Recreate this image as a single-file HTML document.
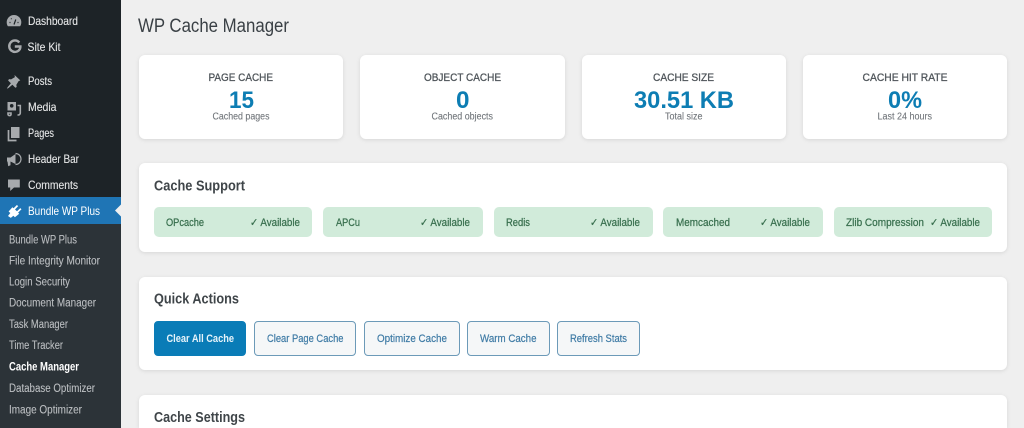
<!DOCTYPE html>
<html lang="en"><head><meta charset="utf-8"><title>WP Cache Manager</title>
<style>
html,body{margin:0;padding:0;width:1024px;height:428px;overflow:hidden;background:#efefef;font-family:"Liberation Sans",sans-serif}
#wrap{position:relative;width:1024px;height:428px;overflow:hidden;background:#efefef}
.b{position:absolute;box-sizing:border-box}
.card{background:#fff;border-radius:6px;box-shadow:0 1px 4px rgba(0,0,0,.10)}
.chip{background:#d1ebda;border-radius:5px;top:207px;height:30px}
.btn{top:321px;height:35px;border-radius:4px;background:#f5f7f8;border:1px solid #6c9ab8}
svg{position:absolute;left:0;top:0;filter:blur(.25px)}
.m{fill:#e4e5e6;font-size:12px;stroke:#e4e5e6;stroke-width:.12px}
.s{fill:#bcbfc2;font-size:11.5px;stroke:#bcbfc2;stroke-width:.1px}
.h{fill:#3f4549;font-size:14.5px;font-weight:bold}
.l{fill:#50565b;font-size:11px;stroke:#50565b;stroke-width:.3px}
.n{fill:#0d7db3;font-size:24px;font-weight:bold}
.d{fill:#70757a;font-size:10.5px;stroke:#70757a;stroke-width:.1px}
.c{fill:#39704f;font-size:11px;stroke:#39704f;stroke-width:.25px}
.q{fill:#3f7ba5;font-size:11px;stroke:#3f7ba5;stroke-width:.2px}
.i{fill:#a7aaad}
</style></head><body>
<div id="wrap">
<div class="b" style="left:0;top:0;width:121px;height:428px;background:#1d2327"></div>
<div class="b" style="left:0;top:197px;width:121px;height:27px;background:#1f75b5"></div>
<div class="b" style="left:0;top:224px;width:121px;height:204px;background:#2c3338"></div>

<div class="b card" style="left:139px;top:55px;width:204px;height:84px"></div>
<div class="b card" style="left:360px;top:55px;width:205px;height:84px"></div>
<div class="b card" style="left:582px;top:55px;width:204px;height:84px"></div>
<div class="b card" style="left:803px;top:55px;width:204px;height:84px"></div>
<div class="b card" style="left:139px;top:163px;width:868px;height:89px"></div>
<div class="b card" style="left:139px;top:277px;width:868px;height:93px"></div>
<div class="b card" style="left:139px;top:395px;width:868px;height:33px;border-radius:6px 6px 0 0"></div>

<div class="b chip" style="left:154px;width:158px"></div>
<div class="b chip" style="left:323px;width:160px"></div>
<div class="b chip" style="left:494px;width:159px"></div>
<div class="b chip" style="left:663px;width:160px"></div>
<div class="b chip" style="left:834px;width:158px"></div>

<div class="b btn" style="left:154px;width:92px;background:#0a7cb7;border-color:#0a7cb7"></div>
<div class="b btn" style="left:254px;width:102px"></div>
<div class="b btn" style="left:364px;width:96px"></div>
<div class="b btn" style="left:467px;width:83px"></div>
<div class="b btn" style="left:557px;width:83px"></div>

<svg width="1024" height="428" viewBox="0 0 1024 428">
<!-- sidebar icons -->
<path class="i" d="M14 15a7.300 7.300 0 0 0-7.300 7.300c0 1.600.4 2.900 1.200 3.900h12.200c.8-1 1.200-2.300 1.200-3.900a7.300 7.300 0 0 0-7.300-7.300z"/>
<path d="M14 24.500l1.800-5M9.500 22.500h1M17.500 22.500h1M11 18.500l.6.600" stroke="#1d2327" stroke-width="1.200" fill="none"/>
<path d="M19.300 42.500a5.700 5.700 0 1 0 .6 6.500 5.700 5.700 0 0 0 .5-2.500h-5.600" fill="none" stroke="#a7aaad" stroke-width="2.400"/>
<path class="i" d="M14.500 75l5.800 5.400-1.700.7-2.300 3.800.4 2.100-1.300.8-3-3-3.900 3.200-1.600.7.700-1.500 3.300-3.900-2.800-2.800.9-1.400 2.100.3 3.800-2.300z"/>
<path class="i" d="M7.500 102h8.500v8.500h-8.500z"/><circle cx="11.700" cy="105.800" r="1.800" fill="#1d2327"/>
<path d="M17.500 105.500h2.800v7.500a2 2 0 0 1-2 2h-.8M8 113h3v1.600a1.300 1.300 0 0 1-1.500 0.900 1.300 1.300 0 0 1-1.500-1.200z" fill="none" stroke="#a7aaad" stroke-width="1.600"/>
<path class="i" d="M11 127h8.500v11H11z"/><path d="M8.500 130v10.500h8" fill="none" stroke="#a7aaad" stroke-width="1.700"/>
<path class="i" d="M7 157.500h3.500l5-3.500v10l-5-2.500v3.800l-2.300 1-.7-4.800H7z"/>
<path d="M15.500 153.500a5.500 5.500 0 0 1 0 11" fill="none" stroke="#a7aaad" stroke-width="1.200"/>
<path class="i" d="M8 179.500h11.800v8h-5.800l-3.800 3.500v-3.500H8z"/>
<path fill="#fff" d="M8 217l2.300-3-1.700-1.500 3.800-4.300 1.200 1.100 3.300-3.300 1.300 1.100-3.200 3.400 2 1.800 3.300-3.200 1.200 1.200-3.400 3.300 1.100 1.100-4.300 3.600-1.500-1.500-2.600 2.100z" transform="translate(0 -1)"/>
<path fill="#efefef" d="M121 204.500l-6 6 6 6z"/>

<!-- sidebar text -->
<text class="m" x="28" y="25" textLength="50" lengthAdjust="spacingAndGlyphs">Dashboard</text>
<text class="m" x="27.500" y="51" textLength="33" lengthAdjust="spacingAndGlyphs">Site Kit</text>
<text class="m" x="28" y="85" textLength="24" lengthAdjust="spacingAndGlyphs">Posts</text>
<text class="m" x="28" y="111" textLength="28.500" lengthAdjust="spacingAndGlyphs">Media</text>
<text class="m" x="28" y="137" textLength="26" lengthAdjust="spacingAndGlyphs">Pages</text>
<text class="m" x="28" y="163" textLength="51" lengthAdjust="spacingAndGlyphs">Header Bar</text>
<text class="m" x="28" y="189" textLength="50" lengthAdjust="spacingAndGlyphs">Comments</text>
<text x="28" y="215" textLength="72" lengthAdjust="spacingAndGlyphs" style="fill:#fff;font-size:12px">Bundle WP Plus</text>

<text class="s" x="9" y="243.500" textLength="68" lengthAdjust="spacingAndGlyphs">Bundle WP Plus</text>
<text class="s" x="9" y="264.500" textLength="91" lengthAdjust="spacingAndGlyphs">File Integrity Monitor</text>
<text class="s" x="9" y="285.500" textLength="61" lengthAdjust="spacingAndGlyphs">Login Security</text>
<text class="s" x="9" y="306.500" textLength="87" lengthAdjust="spacingAndGlyphs">Document Manager</text>
<text class="s" x="9" y="328" textLength="59" lengthAdjust="spacingAndGlyphs">Task Manager</text>
<text class="s" x="9" y="349" textLength="54" lengthAdjust="spacingAndGlyphs">Time Tracker</text>
<text x="9" y="370.500" textLength="70" lengthAdjust="spacingAndGlyphs" style="fill:#fff;font-size:11.500px;font-weight:bold">Cache Manager</text>
<text class="s" x="9" y="392" textLength="86" lengthAdjust="spacingAndGlyphs">Database Optimizer</text>
<text class="s" x="9" y="413.500" textLength="73" lengthAdjust="spacingAndGlyphs">Image Optimizer</text>

<!-- main -->
<text x="138" y="32" textLength="151" lengthAdjust="spacingAndGlyphs" style="fill:#3a4045;font-size:19px">WP Cache Manager</text>

<text class="l" x="208.500" y="81" textLength="64.500" lengthAdjust="spacingAndGlyphs">PAGE CACHE</text>
<text class="n" x="229" y="108" textLength="25" lengthAdjust="spacingAndGlyphs">15</text>
<text class="d" x="212.500" y="119.500" textLength="57" lengthAdjust="spacingAndGlyphs">Cached pages</text>

<text class="l" x="424" y="81" textLength="77" lengthAdjust="spacingAndGlyphs">OBJECT CACHE</text>
<text class="n" x="456" y="108" textLength="13.500" lengthAdjust="spacingAndGlyphs">0</text>
<text class="d" x="431.500" y="119.500" textLength="61.500" lengthAdjust="spacingAndGlyphs">Cached objects</text>

<text class="l" x="653" y="81" textLength="61" lengthAdjust="spacingAndGlyphs">CACHE SIZE</text>
<text class="n" x="634" y="108" textLength="100" lengthAdjust="spacingAndGlyphs">30.51 KB</text>
<text class="d" x="665" y="119.500" textLength="37.500" lengthAdjust="spacingAndGlyphs">Total size</text>

<text class="l" x="862.500" y="81" textLength="85" lengthAdjust="spacingAndGlyphs">CACHE HIT RATE</text>
<text class="n" x="888" y="108" textLength="34" lengthAdjust="spacingAndGlyphs">0%</text>
<text class="d" x="877.500" y="119.500" textLength="54.500" lengthAdjust="spacingAndGlyphs">Last 24 hours</text>

<text class="h" x="154" y="190.500" textLength="91" lengthAdjust="spacingAndGlyphs">Cache Support</text>

<text class="c" x="166" y="226" textLength="38" lengthAdjust="spacingAndGlyphs">OPcache</text>
<text class="c" x="250" y="226" textLength="50" lengthAdjust="spacingAndGlyphs">✓ Available</text>
<text class="c" x="336" y="226" textLength="24" lengthAdjust="spacingAndGlyphs">APCu</text>
<text class="c" x="420" y="226" textLength="50" lengthAdjust="spacingAndGlyphs">✓ Available</text>
<text class="c" x="506" y="226" textLength="24" lengthAdjust="spacingAndGlyphs">Redis</text>
<text class="c" x="590" y="226" textLength="50" lengthAdjust="spacingAndGlyphs">✓ Available</text>
<text class="c" x="676" y="226" textLength="54" lengthAdjust="spacingAndGlyphs">Memcached</text>
<text class="c" x="760" y="226" textLength="50" lengthAdjust="spacingAndGlyphs">✓ Available</text>
<text class="c" x="846" y="226" textLength="78" lengthAdjust="spacingAndGlyphs">Zlib Compression</text>
<text class="c" x="930" y="226" textLength="50" lengthAdjust="spacingAndGlyphs">✓ Available</text>

<text class="h" x="154" y="303.500" textLength="85" lengthAdjust="spacingAndGlyphs">Quick Actions</text>

<text x="166.500" y="342" textLength="67.500" lengthAdjust="spacingAndGlyphs" style="fill:#e6f3fa;font-size:11px;font-weight:bold">Clear All Cache</text>
<text class="q" x="267" y="342" textLength="76.500" lengthAdjust="spacingAndGlyphs">Clear Page Cache</text>
<text class="q" x="377" y="342" textLength="70" lengthAdjust="spacingAndGlyphs">Optimize Cache</text>
<text class="q" x="480" y="342" textLength="56.500" lengthAdjust="spacingAndGlyphs">Warm Cache</text>
<text class="q" x="570" y="342" textLength="57" lengthAdjust="spacingAndGlyphs">Refresh Stats</text>

<text class="h" x="154" y="422" textLength="91" lengthAdjust="spacingAndGlyphs">Cache Settings</text>
</svg>
</div>
</body></html>
